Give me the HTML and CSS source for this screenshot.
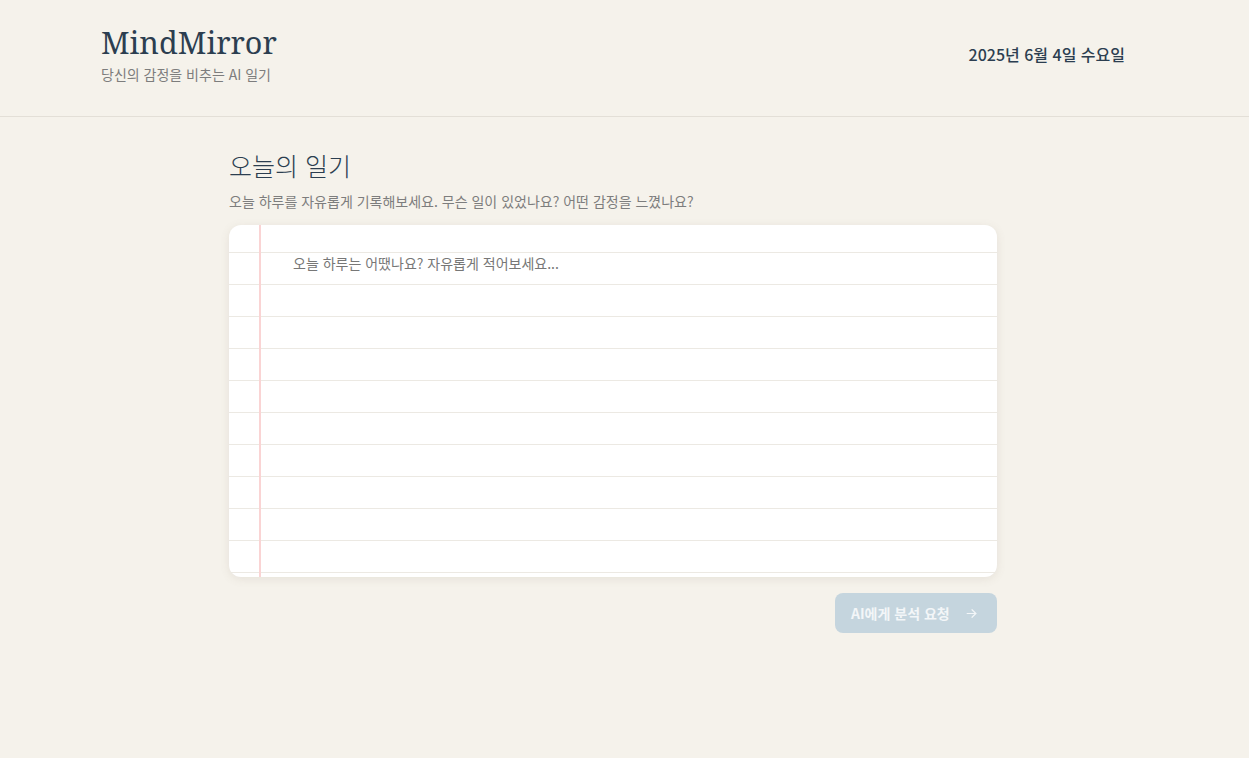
FILE: index.html
```html
<!DOCTYPE html>
<html lang="ko">
<head>
<meta charset="utf-8">
<title>MindMirror</title>
<link rel="stylesheet" href="styles.css">
</head>
<body>
<header class="site-header">
  <div class="container header-inner">
    <div class="brand">
      <h1 class="logo">MindMirror</h1>
      <p class="tagline">당신의 감정을 비추는 AI 일기</p>
    </div>
    <div class="date">2025년 6월 4일 수요일</div>
  </div>
</header>
<main class="container">
  <section class="diary">
    <h2 class="diary-title">오늘의 일기</h2>
    <p class="diary-desc">오늘 하루를 자유롭게 기록해보세요. 무슨 일이 있었나요? 어떤 감정을 느꼈나요?</p>
    <div class="paper">
      <textarea class="paper-input" placeholder="오늘 하루는 어땠나요? 자유롭게 적어보세요..."></textarea>
    </div>
    <div class="actions">
      <button class="analyze-btn" disabled>
        <span class="btn-label">AI에게 분석 요청</span>
        <svg class="arrow" width="13" height="13" viewBox="0 0 24 24" fill="none" stroke="currentColor" stroke-width="2.2" stroke-linecap="round" stroke-linejoin="round"><path d="M4 12h16"/><path d="M13 5l7 7-7 7"/></svg>
      </button>
    </div>
  </section>
</main>
</body>
</html>
```
FILE: styles.css
```css
* { box-sizing: border-box; }
html, body { margin: 0; padding: 0; }
body {
  background: #f5f2eb;
  font-family: "Noto Sans CJK KR", "Noto Sans", sans-serif;
  color: #2c3e50;
  min-height: 758px;
}
.container {
  width: 1024px;
  margin-left: 101px;
}
.site-header {
  border-bottom: 1px solid #e3dfd7;
  height: 117px;
}
.header-inner {
  display: flex;
  justify-content: space-between;
  align-items: center;
  padding-top: 22px;
}
.logo {
  margin: 0;
  font-family: "Noto Serif", "DejaVu Serif", serif;
  font-weight: 400;
  font-size: 30.5px;
  line-height: 40px;
  color: #2c3e50;
}
.tagline {
  margin: 2px 0 0;
  font-size: 14px;
  line-height: 20px;
  color: #7d7d7d;
}
.date {
  font-size: 16px;
  font-weight: 500;
  color: #2c3e50;
  margin-top: 2px;
}
.diary {
  width: 768px;
  margin: 0 auto;
  padding-top: 31px;
}
.diary-title {
  margin: 0;
  font-family: "Noto Sans CJK KR", sans-serif;
  font-weight: 300;
  font-size: 25px;
  line-height: 34px;
  color: #2c3e50;
}
.diary-desc {
  margin: 9px 0 14px;
  font-size: 14px;
  line-height: 20px;
  color: #7d7d7d;
}
.paper {
  position: relative;
  height: 352px;
  background-color: #fff;
  border-radius: 12px;
  box-shadow: 0 2px 10px rgba(120, 110, 90, 0.12);
  overflow: hidden;
  background-image:
    linear-gradient(to right, transparent 30px, #fad4d4 30px, #fad4d4 32px, transparent 32px),
    repeating-linear-gradient(to bottom, transparent 0, transparent 27px, #ece9e3 27px, #ece9e3 28px, transparent 28px, transparent 32px);
}
.paper-input {
  display: block;
  width: 100%;
  height: 100%;
  border: 0;
  outline: none;
  resize: none;
  background: transparent;
  padding: 22px 24px 0 64px;
  font-family: "Noto Sans CJK KR", "Noto Sans", sans-serif;
  font-size: 14px;
  line-height: 32px;
  color: #2c3e50;
}
.paper-input::placeholder { color: #777; }
.actions {
  display: flex;
  justify-content: flex-end;
  margin-top: 16px;
}
.analyze-btn {
  display: flex;
  align-items: center;
  height: 40px;
  width: 162px;
  padding: 0 19px 0 16px;
  border: 0;
  border-radius: 8px;
  background: #c5d5de;
  color: #f3f6f8;
  font-family: "Noto Sans CJK KR", "Noto Sans", sans-serif;
  font-size: 14px;
  font-weight: 700;
  white-space: nowrap;
  cursor: not-allowed;
}
.arrow { margin-left: auto; }
```
